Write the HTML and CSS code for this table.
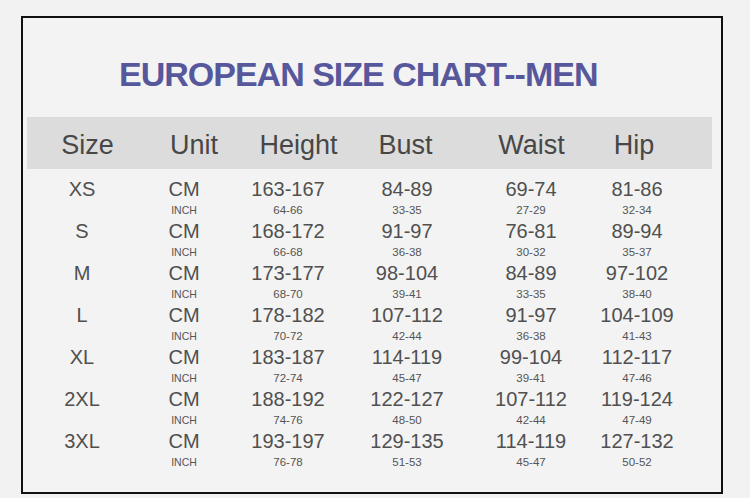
FILE: index.html
```html
<!DOCTYPE html>
<html>
<head>
<meta charset="utf-8">
<link rel="stylesheet" href="styles.css">
</head>
<body>
<div class="frame">
  <h1 class="title">EUROPEAN SIZE CHART--MEN</h1>
  <div class="head">
    <span>Size</span><span>Unit</span><span>Height</span><span>Bust</span><span>Waist</span><span>Hip</span>
  </div>
  <div class="rows">
    <div class="row"><span class="big">XS</span><span class="big">CM</span><span class="big">163-167</span><span class="big">84-89</span><span class="big">69-74</span><span class="big">81-86</span>
      <span></span><span class="small unit">INCH</span><span class="small">64-66</span><span class="small">33-35</span><span class="small">27-29</span><span class="small">32-34</span></div>
    <div class="row"><span class="big">S</span><span class="big">CM</span><span class="big">168-172</span><span class="big">91-97</span><span class="big">76-81</span><span class="big">89-94</span>
      <span></span><span class="small unit">INCH</span><span class="small">66-68</span><span class="small">36-38</span><span class="small">30-32</span><span class="small">35-37</span></div>
    <div class="row"><span class="big">M</span><span class="big">CM</span><span class="big">173-177</span><span class="big">98-104</span><span class="big">84-89</span><span class="big">97-102</span>
      <span></span><span class="small unit">INCH</span><span class="small">68-70</span><span class="small">39-41</span><span class="small">33-35</span><span class="small">38-40</span></div>
    <div class="row"><span class="big">L</span><span class="big">CM</span><span class="big">178-182</span><span class="big">107-112</span><span class="big">91-97</span><span class="big">104-109</span>
      <span></span><span class="small unit">INCH</span><span class="small">70-72</span><span class="small">42-44</span><span class="small">36-38</span><span class="small">41-43</span></div>
    <div class="row"><span class="big">XL</span><span class="big">CM</span><span class="big">183-187</span><span class="big">114-119</span><span class="big">99-104</span><span class="big">112-117</span>
      <span></span><span class="small unit">INCH</span><span class="small">72-74</span><span class="small">45-47</span><span class="small">39-41</span><span class="small">47-46</span></div>
    <div class="row"><span class="big">2XL</span><span class="big">CM</span><span class="big">188-192</span><span class="big">122-127</span><span class="big">107-112</span><span class="big">119-124</span>
      <span></span><span class="small unit">INCH</span><span class="small">74-76</span><span class="small">48-50</span><span class="small">42-44</span><span class="small">47-49</span></div>
    <div class="row"><span class="big">3XL</span><span class="big">CM</span><span class="big">193-197</span><span class="big">129-135</span><span class="big">114-119</span><span class="big">127-132</span>
      <span></span><span class="small unit">INCH</span><span class="small">76-78</span><span class="small">51-53</span><span class="small">45-47</span><span class="small">50-52</span></div>
  </div>
</div>
</body>
</html>
```
FILE: styles.css
```css
html, body {
  margin: 0;
  padding: 0;
  background: #f2f2f2;
}
body {
  width: 750px;
  height: 498px;
  overflow: hidden;
  font-family: "Liberation Sans", Arial, sans-serif;
}
.frame {
  box-sizing: border-box;
  margin: 16px 0 0 21px;
  width: 702px;
  height: 478px;
  border: 2px solid #111;
  background: #f3f3f3;
}
.title {
  margin: 0;
  padding: 39px 0 0 96px;
  font-size: 34px;
  line-height: 34px;
  font-weight: bold;
  letter-spacing: -1px;
  color: #57589c;
}
.head {
  margin: 26px 0 0 4px;
  width: 685px;
  height: 52px;
  background: #dcdcdc;
  display: grid;
  grid-template-columns: 109px 104px 105px 109px 143px 62px;
  padding-left: 6px;
  box-sizing: border-box;
  align-items: center;
  font-size: 27px;
  color: #474747;
}
.head span {
  text-align: center;
  padding-top: 4px;
}
.rows {
  margin-top: 8px;
  padding-left: 8px;
}
.row {
  display: grid;
  grid-template-columns: 102px 102px 106px 132px 116px 96px;
  grid-template-rows: 24px 18px;
  color: #505050;
}
.row span {
  text-align: center;
}
.big {
  font-size: 20px;
  line-height: 24px;
}
.small {
  font-size: 11.5px;
  line-height: 18px;
  color: #555;
}
.small.unit {
  font-size: 10.5px;
}
```
